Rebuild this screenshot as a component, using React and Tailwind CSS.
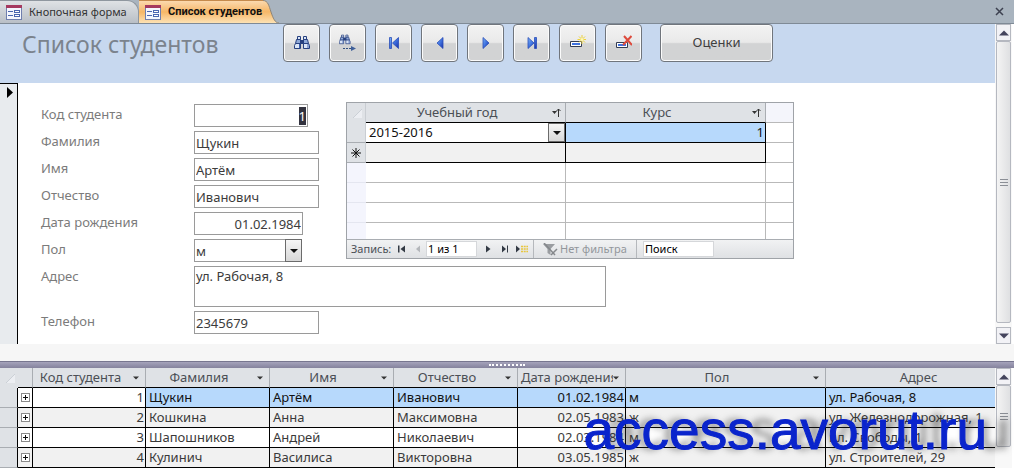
import { useEffect, useRef } from "react"

const students = [
  { id: 1, last: "Щукин", first: "Артём", middle: "Иванович", born: "01.02.1984", sex: "м", address: "ул. Рабочая, 8" },
  { id: 2, last: "Кошкина", first: "Анна", middle: "Максимовна", born: "02.05.1983", sex: "ж", address: "ул. Железнодорожная, 1" },
  { id: 3, last: "Шапошников", first: "Андрей", middle: "Николаевич", born: "02.03.1984", sex: "м", address: "пл. Свободы, 1" },
  { id: 4, last: "Кулинич", first: "Василиса", middle: "Викторовна", born: "03.05.1985", sex: "ж", address: "ул. Строителей, 29" },
]

const columns = [
  { title: "Код студента", width: "w-[113px]", arrow: true },
  { title: "Фамилия", width: "w-[124px]", arrow: true },
  { title: "Имя", width: "w-[124px]", arrow: true },
  { title: "Отчество", width: "w-[124px]", arrow: true },
  { title: "Дата рождения", width: "w-[108px]", arrow: true },
  { title: "Пол", width: "w-[200px]", arrow: true },
  { title: "Адрес", width: "", arrow: false },
]

const FormIcon = () => (
  <svg width="16" height="15" viewBox="0 0 16 15" className="shrink-0" aria-hidden="true">
    <rect x="0.5" y="0.5" width="15" height="14" fill="#f4f6fd" stroke="#6f7fae" />
    <rect x="0" y="0" width="16" height="3" fill="#a5395f" />
    <path d="M2 6.5h5M2 10.5h5" stroke="#4a66b0" />
    <rect x="8.5" y="5.5" width="5" height="2" fill="#fff" stroke="#4a66b0" />
    <rect x="8.5" y="9.5" width="5" height="2" fill="#fff" stroke="#4a66b0" />
  </svg>
)

const Blues = () => (
  <defs>
    <linearGradient id="blue" x1="0" y1="0" x2="1" y2="1">
      <stop offset="0" stopColor="#7db4f5" />
      <stop offset="0.5" stopColor="#3f72df" />
      <stop offset="1" stopColor="#1a2fa8" />
    </linearGradient>
  </defs>
)

const Binoculars = () => (
  <g stroke="#27407f" fill="#dbe6f7">
    <path d="M3.5 1.5h3v3h-3zM9.5 1.5h3v3h-3z" />
    <path d="M2.5 4.5h4v4h-5zM9.5 4.5h4l1 4h-5z" fill="#8fa9d8" />
    <path d="M1.5 8.5h5v5h-6v-3zM9.5 8.5h5l1 2v3h-6z" />
    <path d="M6.5 5.5h3v3h-3z" fill="#27407f" />
    <path d="M5.5 9v4M14 9v4" stroke="#3c5fae" />
  </g>
)

const Svg = ({ children }) => (
  <svg width="16" height="16" viewBox="0 0 16 16" aria-hidden="true">
    {children}
  </svg>
)

const toolbar = [
  { label: "Найти", icon: <Svg><Binoculars /></Svg> },
  {
    label: "Найти далее",
    icon: (
      <svg width="18" height="18" viewBox="0 0 18 18" aria-hidden="true">
        <g transform="scale(0.72)"><Binoculars /></g>
        <path d="M4 14.5h9" stroke="#33507f" strokeDasharray="2 1" />
        <path d="M12 12l5 2.500-5 2.500z" fill="#3e5f99" />
      </svg>
    ),
  },
  {
    label: "Первая запись",
    icon: <Svg><Blues /><path d="M3.500 2.500h2v11h-2zM12.500 2.500v11l-6-5.500z" fill="url(#blue)" stroke="#2a4cb8" strokeWidth="0.800" /></Svg>,
  },
  {
    label: "Предыдущая запись",
    icon: <Svg><path d="M11 2.500v11L5 8z" fill="url(#blue)" stroke="#2a4cb8" strokeWidth="0.800" /></Svg>,
  },
  {
    label: "Следующая запись",
    icon: <Svg><path d="M5 2.500v11L11 8z" fill="url(#blue)" stroke="#2a4cb8" strokeWidth="0.800" /></Svg>,
  },
  {
    label: "Последняя запись",
    icon: <Svg><path d="M10.500 2.500h2v11h-2zM4 2.500v11L10 8z" fill="url(#blue)" stroke="#2a4cb8" strokeWidth="0.800" /></Svg>,
  },
  {
    label: "Добавить запись",
    icon: (
      <Svg>
        <path d="M0.500 6.500h11v5h-11z" fill="#fff" stroke="#333c52" />
        <path d="M2 8h8v2H2z" fill="#3f72df" />
        <path d="M12 0v9M7.500 4.500h9M9 1.500l6 6M15 1.500l-6 6" stroke="#ecd23c" />
        <circle cx="12" cy="4.500" r="1.500" fill="#fff8b8" />
      </Svg>
    ),
  },
  {
    label: "Удалить запись",
    icon: (
      <Svg>
        <path d="M0.500 7.500h11v5h-11z" fill="#fff" stroke="#333c52" />
        <path d="M2 9h8v2H2z" fill="#3f72df" />
        <path d="M8 1l8 9M15.500 1L7 10" stroke="#dd4a3c" strokeWidth="2" />
      </Svg>
    ),
  },
]

const buttonClass =
  "flex h-[38px] items-center justify-center rounded-[4px] border border-[#70757c] bg-linear-to-b from-[#f3f3f3] from-0% via-[#e9e9e9] via-48% to-[#d2d3d4] to-52% shadow-[inset_0_0_0_1px_#fbfbfb]"

const fieldClass = "h-[23px] border border-[#9a9a9a] bg-white px-px text-[13px] leading-[18px] text-[#3c3c3c] outline-none"

const Triangle = ({ up }) => (
  <svg width="10" height="6" viewBox="0 0 10 6" aria-hidden="true">
    <path d={up ? "M0 5.500L5 0.500l5 5z" : "M0 0.500h10l-5 5z"} fill="#45455e" />
  </svg>
)

const HeaderArrow = () => (
  <svg width="6" height="4" viewBox="0 0 6 4" className="shrink-0" aria-hidden="true">
    <path d="M0 0.500h6L3 3.500z" fill="#333" />
  </svg>
)

const SortArrow = () => (
  <svg width="9" height="9" viewBox="0 0 9 9" className="shrink-0" aria-hidden="true">
    <path d="M0 3h5L2.500 6z" fill="#333" />
    <path d="M6.500 1v8M4.500 3l2-2 2 2" fill="none" stroke="#333" />
  </svg>
)

const DropArrow = () => (
  <span className="pointer-events-none absolute inset-y-0 right-0 flex w-[17px] items-center justify-center border border-[#6b6b6b] bg-linear-to-b from-[#f6f6f6] to-[#d8d8d8]">
    <svg width="8" height="4" viewBox="0 0 8 4" aria-hidden="true">
      <path d="M0 0h8L4 4z" fill="#111" />
    </svg>
  </span>
)

const SelectAll = () => (
  <svg width="13" height="13" viewBox="0 0 13 13" className="mx-auto" aria-hidden="true">
    <path d="M12 2v9H3z" fill="#eceef2" />
    <path d="M12 2L3 11" stroke="#cbd0d6" />
  </svg>
)

const ScrollButton = ({ up, label }) => (
  <button type="button" aria-label={label} className="flex h-[17px] w-[15px] shrink-0 items-center justify-center border border-[#b5b8c0] bg-[#f2f2f6]">
    <Triangle up={up} />
  </button>
)

const Grip = () => (
  <span className="flex w-2 flex-col gap-[2px]">
    <span className="h-px bg-[#8b8f96]" />
    <span className="h-px bg-[#8b8f96]" />
    <span className="h-px bg-[#8b8f96]" />
  </span>
)

const thumbClass = "flex w-[15px] items-center justify-center rounded-[2px] border border-[#b5b8c0] bg-linear-to-r from-[#f4f4f4] to-[#dfe0e2]"

const Field = ({ id, label, children }) => (
  <div className="flex items-start">
    <label htmlFor={id} className="w-[153px] shrink-0 text-[13px] leading-5 text-[#7b7b7b]">{label}</label>
    {children}
  </div>
)

const Subform = () => (
  <div className="w-[448px] border border-[#9fa3a8] bg-white">
    <table className="w-full table-fixed border-separate border-spacing-0 text-[13px] leading-[19px] text-[#111]">
      <colgroup>
        <col className="w-[19px]" />
        <col className="w-[200px]" />
        <col className="w-[200px]" />
        <col />
      </colgroup>
      <thead>
        <tr className="h-5 text-[#4b4f55]">
          <th className="border-r border-[#c9cdd2] bg-[#dfe2e6] p-0"><SelectAll /></th>
          {["Учебный год", "Курс"].map((name) => (
            <th key={name} className="border-r border-b border-r-[#a9adb2] border-b-black bg-[#dfe2e6] p-0 font-normal">
              <div className="flex items-center pr-1">
                <span className="flex-1 pr-1">{name}</span>
                <SortArrow />
              </div>
            </th>
          ))}
          <td className="border-b border-[#b9b9b9] bg-[#f4f5fb] p-0" />
        </tr>
      </thead>
      <tbody>
        <tr className="h-5">
          <td className="border-r border-b border-r-[#c9cdd2] border-b-[#a9adb2] bg-[#dfe2e6] p-0" />
          <td className="border-r border-b border-black p-0">
            <div className="relative flex">
              <select aria-label="Учебный год" defaultValue="2015-2016" className="h-[19px] w-full appearance-none bg-white pl-[3px] outline-none">
                <option>2015-2016</option>
              </select>
              <DropArrow />
            </div>
          </td>
          <td className="border-r border-b border-black bg-[#b7d9fc] p-0 pr-px text-right">1</td>
          <td className="border-b border-[#b9b9b9] p-0" />
        </tr>
        <tr className="h-5">
          <td className="border-r border-b border-r-[#c9cdd2] border-b-[#a9adb2] bg-[#dfe2e6] p-0">
            <svg width="10" height="10" viewBox="0 0 10 10" className="mx-auto" aria-hidden="true">
              <path d="M5 0v10M0 5h10M1.500 1.500l7 7M8.500 1.500l-7 7" stroke="#111" />
            </svg>
          </td>
          <td className="border-r border-b border-black bg-[#f1f1f1] p-0" />
          <td className="border-r border-b border-black bg-[#f1f1f1] p-0" />
          <td className="border-b border-[#b9b9b9] p-0" />
        </tr>
        {[1, 2, 3].map((n) => (
          <tr key={n} className="h-5">
            <td className="border-b border-[#e4e6f0] bg-[#f4f5fd] p-0" />
            <td className="border-r border-b border-[#b9b9b9] p-0" />
            <td className="border-r border-b border-[#b9b9b9] p-0" />
            <td className="border-b border-[#b9b9b9] p-0" />
          </tr>
        ))}
        <tr className="h-4">
          <td className="bg-[#f4f5fd] p-0" />
          <td className="border-r border-[#b9b9b9] p-0" />
          <td className="border-r border-[#b9b9b9] p-0" />
          <td className="p-0" />
        </tr>
      </tbody>
    </table>
    <div className="flex h-[19px] items-center border-t border-[#a9adb2] bg-linear-to-b from-[#f1f2f3] to-[#dfe1e4] text-[11px] leading-4 text-[#4b4f55]">
      <span className="w-[50px] pl-1">Запись:</span>
      <button type="button" aria-label="Первая" className="ml-px">
        <svg width="8" height="8" viewBox="0 0 8 8"><path d="M0 0.500h1.500v7H0zM7 0.500v7L2.500 4z" fill="#333a44" /></svg>
      </button>
      <button type="button" aria-label="Предыдущая" className="ml-2">
        <svg width="8" height="8" viewBox="0 0 8 8"><path d="M6 0.500v7L2 4z" fill="#b4b7bb" /></svg>
      </button>
      <input aria-label="Номер записи" defaultValue="1 из 1" className="ml-1 h-4 w-[51px] border border-[#d5d7da] bg-white px-px text-black outline-none" />
      <button type="button" aria-label="Следующая" className="ml-2">
        <svg width="8" height="8" viewBox="0 0 8 8"><path d="M1 0.500v7L5.500 4z" fill="#333a44" /></svg>
      </button>
      <button type="button" aria-label="Последняя" className="ml-2">
        <svg width="8" height="8" viewBox="0 0 8 8"><path d="M1 0.500v7L5 4zM6 0.500h1v7H6z" fill="#333a44" /></svg>
      </button>
      <button type="button" aria-label="Новая" className="ml-[6px]">
        <svg width="14" height="8" viewBox="0 0 14 8">
          <path d="M1 0.500v7L5 4z" fill="#333a44" />
          <path d="M6 1.500h7M6 4h7M6 6.500h7" stroke="#e8c63e" strokeWidth="1.500" strokeDasharray="2 0.700" />
        </svg>
      </button>
      <div className="ml-1 flex h-full w-[104px] items-center gap-[2px] border-x border-[#b5b8bc] pl-2 text-[#93979c]">
        <svg width="16" height="13" viewBox="0 0 16 13" className="shrink-0" aria-hidden="true">
          <path d="M1 1h12L8.500 6v6l-3-2V6z" fill="#9a9da1" />
          <path d="M2 0l11 12M15 6l-6 6" stroke="#85888c" strokeWidth="1.500" />
        </svg>
        <span className="whitespace-nowrap">Нет фильтра</span>
      </div>
      <input aria-label="Поиск" defaultValue="Поиск" className="ml-[6px] h-4 w-[71px] border border-[#d5d7da] bg-white px-px text-black outline-none" />
    </div>
  </div>
)

const StudentsTable = () => (
  <table className="w-full min-w-0 flex-1 table-fixed border-separate border-spacing-0 text-[13px] leading-[19px] text-[#3a3a3a]">
    <thead>
      <tr className="h-5">
        <th className="w-[18px] bg-[#dfe2e6] p-0"><SelectAll /></th>
        <th className="w-[15px] border-r border-b border-r-[#a9adb2] border-b-black bg-[#dfe2e6] p-0" />
        {columns.map((col) => (
          <th
            key={col.title}
            className={`${col.width} border-b border-b-black bg-[#dfe2e6] p-0 font-normal text-[#4b4f55] ${col.arrow ? "border-r border-r-[#a9adb2]" : ""}`}
          >
            <div className={`flex items-center ${col.arrow ? "pr-[6px]" : "pl-4"}`}>
              <span className={`flex-1 overflow-hidden whitespace-nowrap ${col.arrow ? "pr-2 pl-[3px]" : ""}`}>{col.title}</span>
              {col.arrow && <HeaderArrow />}
            </div>
          </th>
        ))}
      </tr>
    </thead>
    <tbody>
      {students.map((s) => {
        const current = s.id === 1
        const shade = s.id % 2 ? "bg-white" : "bg-[#f1f1f1]"
        const cell = `border-b border-black p-0 ${current ? "bg-[#b7d9fc] text-[#111]" : shade}`
        return (
          <tr key={s.id} className="h-5">
            <td className="border-r border-b border-r-black border-b-[#a9adb2] bg-[#dfe2e6] p-0" />
            <td className={`border-r border-b border-black p-0 ${shade}`}>
              <button type="button" aria-label="Развернуть" className="mx-auto flex size-[9px] items-center justify-center border border-[#8a8a8a] bg-white">
                <svg width="5" height="5" viewBox="0 0 5 5"><path d="M2.500 0v5M0 2.500h5" stroke="#111" /></svg>
              </button>
            </td>
            <td className={`border-r border-b border-black p-0 pr-px text-right ${shade}`}>{s.id}</td>
            <td className={`${cell} border-r pl-[3px]`}>{s.last}</td>
            <td className={`${cell} border-r pl-[3px]`}>{s.first}</td>
            <td className={`${cell} border-r pl-[3px]`}>{s.middle}</td>
            <td className={`${cell} border-r pr-px text-right`}>{s.born}</td>
            <td className={`${cell} border-r pl-[3px]`}>{s.sex}</td>
            <td className={`${cell} pl-[3px] whitespace-nowrap`}>{s.address}</td>
          </tr>
        )
      })}
    </tbody>
  </table>
)

const App = () => {
  const codeRef = useRef(null)

  useEffect(() => {
    codeRef.current.focus()
    codeRef.current.select()
  }, [])

  return (
    <div className="relative overflow-hidden bg-white font-['Noto_Sans','Open_Sans',sans-serif]">
      <nav className="flex h-6 items-end border-b border-[#7f8a96] bg-[#a9b4bf] text-[11px]">
        <a href="#switchboard" className="flex h-[23px] w-[139px] items-center gap-[7px] rounded-tr-[12px] border-t border-r border-[#8f979f] bg-linear-to-b from-[#dfe2e5] to-[#b9bfc6] pl-[6px] whitespace-nowrap text-[#333]">
          <FormIcon />
          Кнопочная форма
        </a>
        <a href="#students" className="flex h-[23px] w-[124px] items-center gap-[7px] border-t border-[#c58a4c] bg-linear-to-b from-[#fbd9ae] via-[#f6b767] to-[#fde2b4] pl-[6px] font-['Roboto',sans-serif] font-bold whitespace-nowrap text-[#111]">
          <FormIcon />
          Список студентов
        </a>
        <svg width="16" height="23" viewBox="0 0 16 23" aria-hidden="true">
          <defs>
            <linearGradient id="tab" x1="0" y1="0" x2="0" y2="1">
              <stop offset="0" stopColor="#fbd9ae" />
              <stop offset="0.5" stopColor="#f6b767" />
              <stop offset="1" stopColor="#fde2b4" />
            </linearGradient>
          </defs>
          <path d="M0 0.500C5 0.500 6 6 8 12s4 11 8 11H0z" fill="url(#tab)" />
          <path d="M0 0.500C5 0.500 6 6 8 12s4 11 8 11" fill="none" stroke="#8f8678" />
        </svg>
        <button type="button" aria-label="Закрыть" className="mr-[10px] mb-[7px] ml-auto">
          <svg width="9" height="9" viewBox="0 0 9 9"><path d="M1 1l7 7M8 1L1 8" stroke="#3d4150" strokeWidth="1.500" /></svg>
        </button>
      </nav>

      <div className="flex pr-[2px]">
        <main className="min-w-0 flex-1">
          <header className="flex h-[59px] items-start bg-[#c7d8ef] pl-[22px]">
            <h1 className="w-[261px] pt-1 text-[23px] leading-8 whitespace-nowrap text-[#7b838d]">Список студентов</h1>
            <div className="flex gap-[9px]">
              {toolbar.map((item) => (
                <button key={item.label} type="button" aria-label={item.label} className={`${buttonClass} w-[37px]`}>
                  {item.icon}
                </button>
              ))}
              <button type="button" className={`${buttonClass} ml-[9px] w-[113px] text-[13px] text-[#404040]`}>Оценки</button>
            </div>
          </header>

          <div className="flex">
            <div className="w-[18px] shrink-0 border-t border-r border-black bg-[#e8ebee] pt-[3px] pl-[7px]">
              <svg width="6" height="11" viewBox="0 0 6 11" aria-hidden="true"><path d="M0 0v11l6-5.500z" fill="#000" /></svg>
            </div>
            <form className="flex flex-1 flex-col gap-1 pt-[19px] pb-[10px] pl-[23px]">
              <div className="flex items-start gap-[27px]">
                <div className="flex w-[278px] shrink-0 flex-col gap-1 pt-[2px]">
                  <Field id="code" label="Код студента">
                    <input id="code" ref={codeRef} defaultValue="1" className={`${fieldClass} w-[114px] text-right selection:bg-[#33333f] selection:text-white`} />
                  </Field>
                  <Field id="last" label="Фамилия">
                    <input id="last" defaultValue="Щукин" className={`${fieldClass} w-[125px]`} />
                  </Field>
                  <Field id="first" label="Имя">
                    <input id="first" defaultValue="Артём" className={`${fieldClass} w-[125px]`} />
                  </Field>
                  <Field id="middle" label="Отчество">
                    <input id="middle" defaultValue="Иванович" className={`${fieldClass} w-[125px]`} />
                  </Field>
                  <Field id="born" label="Дата рождения">
                    <input id="born" defaultValue="01.02.1984" className={`${fieldClass} w-[109px] text-right`} />
                  </Field>
                  <Field id="sex" label="Пол">
                    <div className="relative flex">
                      <select id="sex" defaultValue="м" className={`${fieldClass} w-[108px] appearance-none`}>
                        <option>м</option>
                        <option>ж</option>
                      </select>
                      <DropArrow />
                    </div>
                  </Field>
                </div>
                <Subform />
              </div>
              <Field id="address" label="Адрес">
                <textarea id="address" defaultValue="ул. Рабочая, 8" className="h-[41px] w-[412px] resize-none border border-[#9a9a9a] px-px text-[13px] leading-[18px] text-[#3c3c3c] outline-none" />
              </Field>
              <Field id="phone" label="Телефон">
                <input id="phone" defaultValue="2345679" className={`${fieldClass} w-[125px]`} />
              </Field>
            </form>
          </div>
        </main>
        <div className="flex w-[17px] shrink-0 flex-col items-center bg-[#f8f8f8]">
          <ScrollButton up label="Вверх" />
          <div className={`${thumbClass} flex-1`}><Grip /></div>
          <div className="h-1" />
          <ScrollButton label="Вниз" />
        </div>
      </div>

      <div className="h-[17px] bg-[#f6f6f6]" />
      <div className="flex h-[7px] items-center justify-center border-t border-[#77768f] bg-linear-to-b from-[#a5a3bb] to-[#85839d]">
        <span className="w-9 border-t-2 border-dotted border-white" />
      </div>

      <div className="flex pr-[2px]">
        <StudentsTable />
        <div className="flex w-[17px] shrink-0 flex-col items-center bg-[#f8f8f8]">
          <ScrollButton up label="Вверх" />
          <div className={`${thumbClass} h-[62px]`}><Grip /></div>
        </div>
      </div>

      <div className="pointer-events-none absolute right-[27px] bottom-0 font-['Liberation_Sans',sans-serif] text-[55px] leading-[76px] text-[#0a24cc] [-webkit-text-stroke:1px_#0a24cc] [text-shadow:22px_0_7px_rgba(40,40,40,0.6)]">
        access.avorut.ru
      </div>
    </div>
  )
}

export default App
